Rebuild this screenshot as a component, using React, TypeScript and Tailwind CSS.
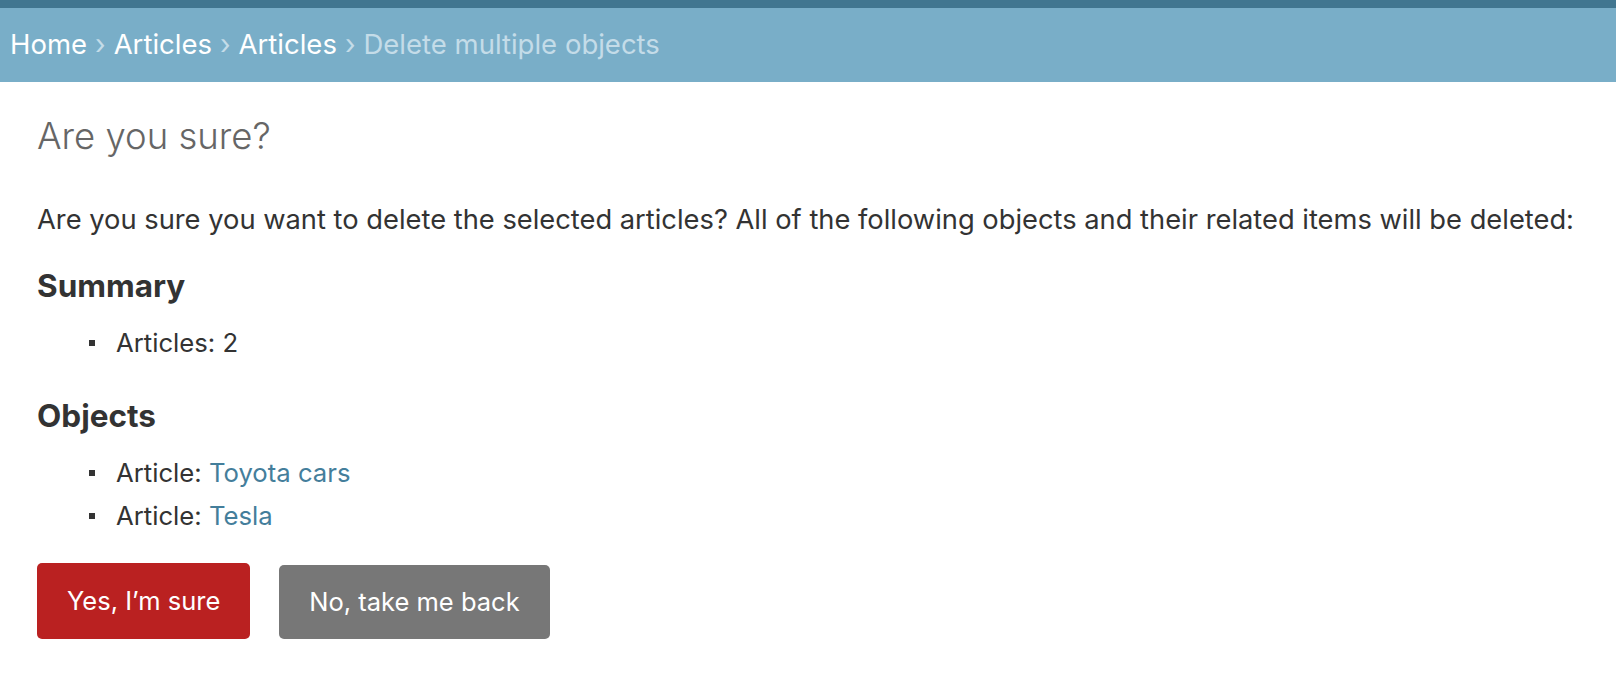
function Bullet({ children }: { children: React.ReactNode }) {
    return (
        <li className="flex items-center">
            <span className="ml-[52px] mr-[21px] h-[6px] w-[6px] bg-[#333]" />
            <span>{children}</span>
        </li>
    );
}

export default function App() {
    const font = { fontFamily: 'Inter, "Noto Sans", sans-serif' };
    return (
        <div className="min-h-[688px] bg-white text-[#333]" style={font}>
            <div className="h-[8px] bg-[#417690]" />
            <div className="flex h-[74px] items-center bg-[#79aec8] px-[10px] text-[27.5px] text-white">
                <span>Home</span>
                <span className="mx-[8px] text-[#c4dce8]">›</span>
                <span>Articles</span>
                <span className="mx-[8px] text-[#c4dce8]">›</span>
                <span>Articles</span>
                <span className="mx-[8px] text-[#c4dce8]">›</span>
                <span className="text-[#c4dce8]">Delete multiple objects</span>
            </div>
            <div className="px-[37px] pt-[30px]">
                <h1 className="text-[36.5px] font-light leading-[48px] text-[#666]">Are you sure?</h1>
                <p className="mt-[43px] text-[27.3px] leading-[34px]">
                    Are you sure you want to delete the selected articles? All of the following objects and their related items will be deleted:
                </p>
                <h2 className="mt-[31px] text-[31.5px] font-bold leading-[36px]">Summary</h2>
                <ul className="mt-[22px] text-[25.7px] leading-[34px]">
                    <Bullet>Articles: 2</Bullet>
                </ul>
                <h2 className="mt-[38px] text-[31.5px] font-bold leading-[36px]">Objects</h2>
                <ul className="mt-[22px] space-y-[9px] text-[25.7px] leading-[34px]">
                    <Bullet>
                        Article: <a className="text-[#447e9b]">Toyota cars</a>
                    </Bullet>
                    <Bullet>
                        Article: <a className="text-[#447e9b]">Tesla</a>
                    </Bullet>
                </ul>
                <div className="mt-[30px] flex items-start gap-[29px]">
                    <button className="h-[76px] rounded-[5px] bg-[#ba2121] px-[30px] text-[25.5px] text-white">
                        Yes, I’m sure
                    </button>
                    <button className="mt-[2px] h-[74px] rounded-[5px] bg-[#777] px-[30px] text-[25.5px] text-white">
                        No, take me back
                    </button>
                </div>
            </div>
        </div>
    );
}
